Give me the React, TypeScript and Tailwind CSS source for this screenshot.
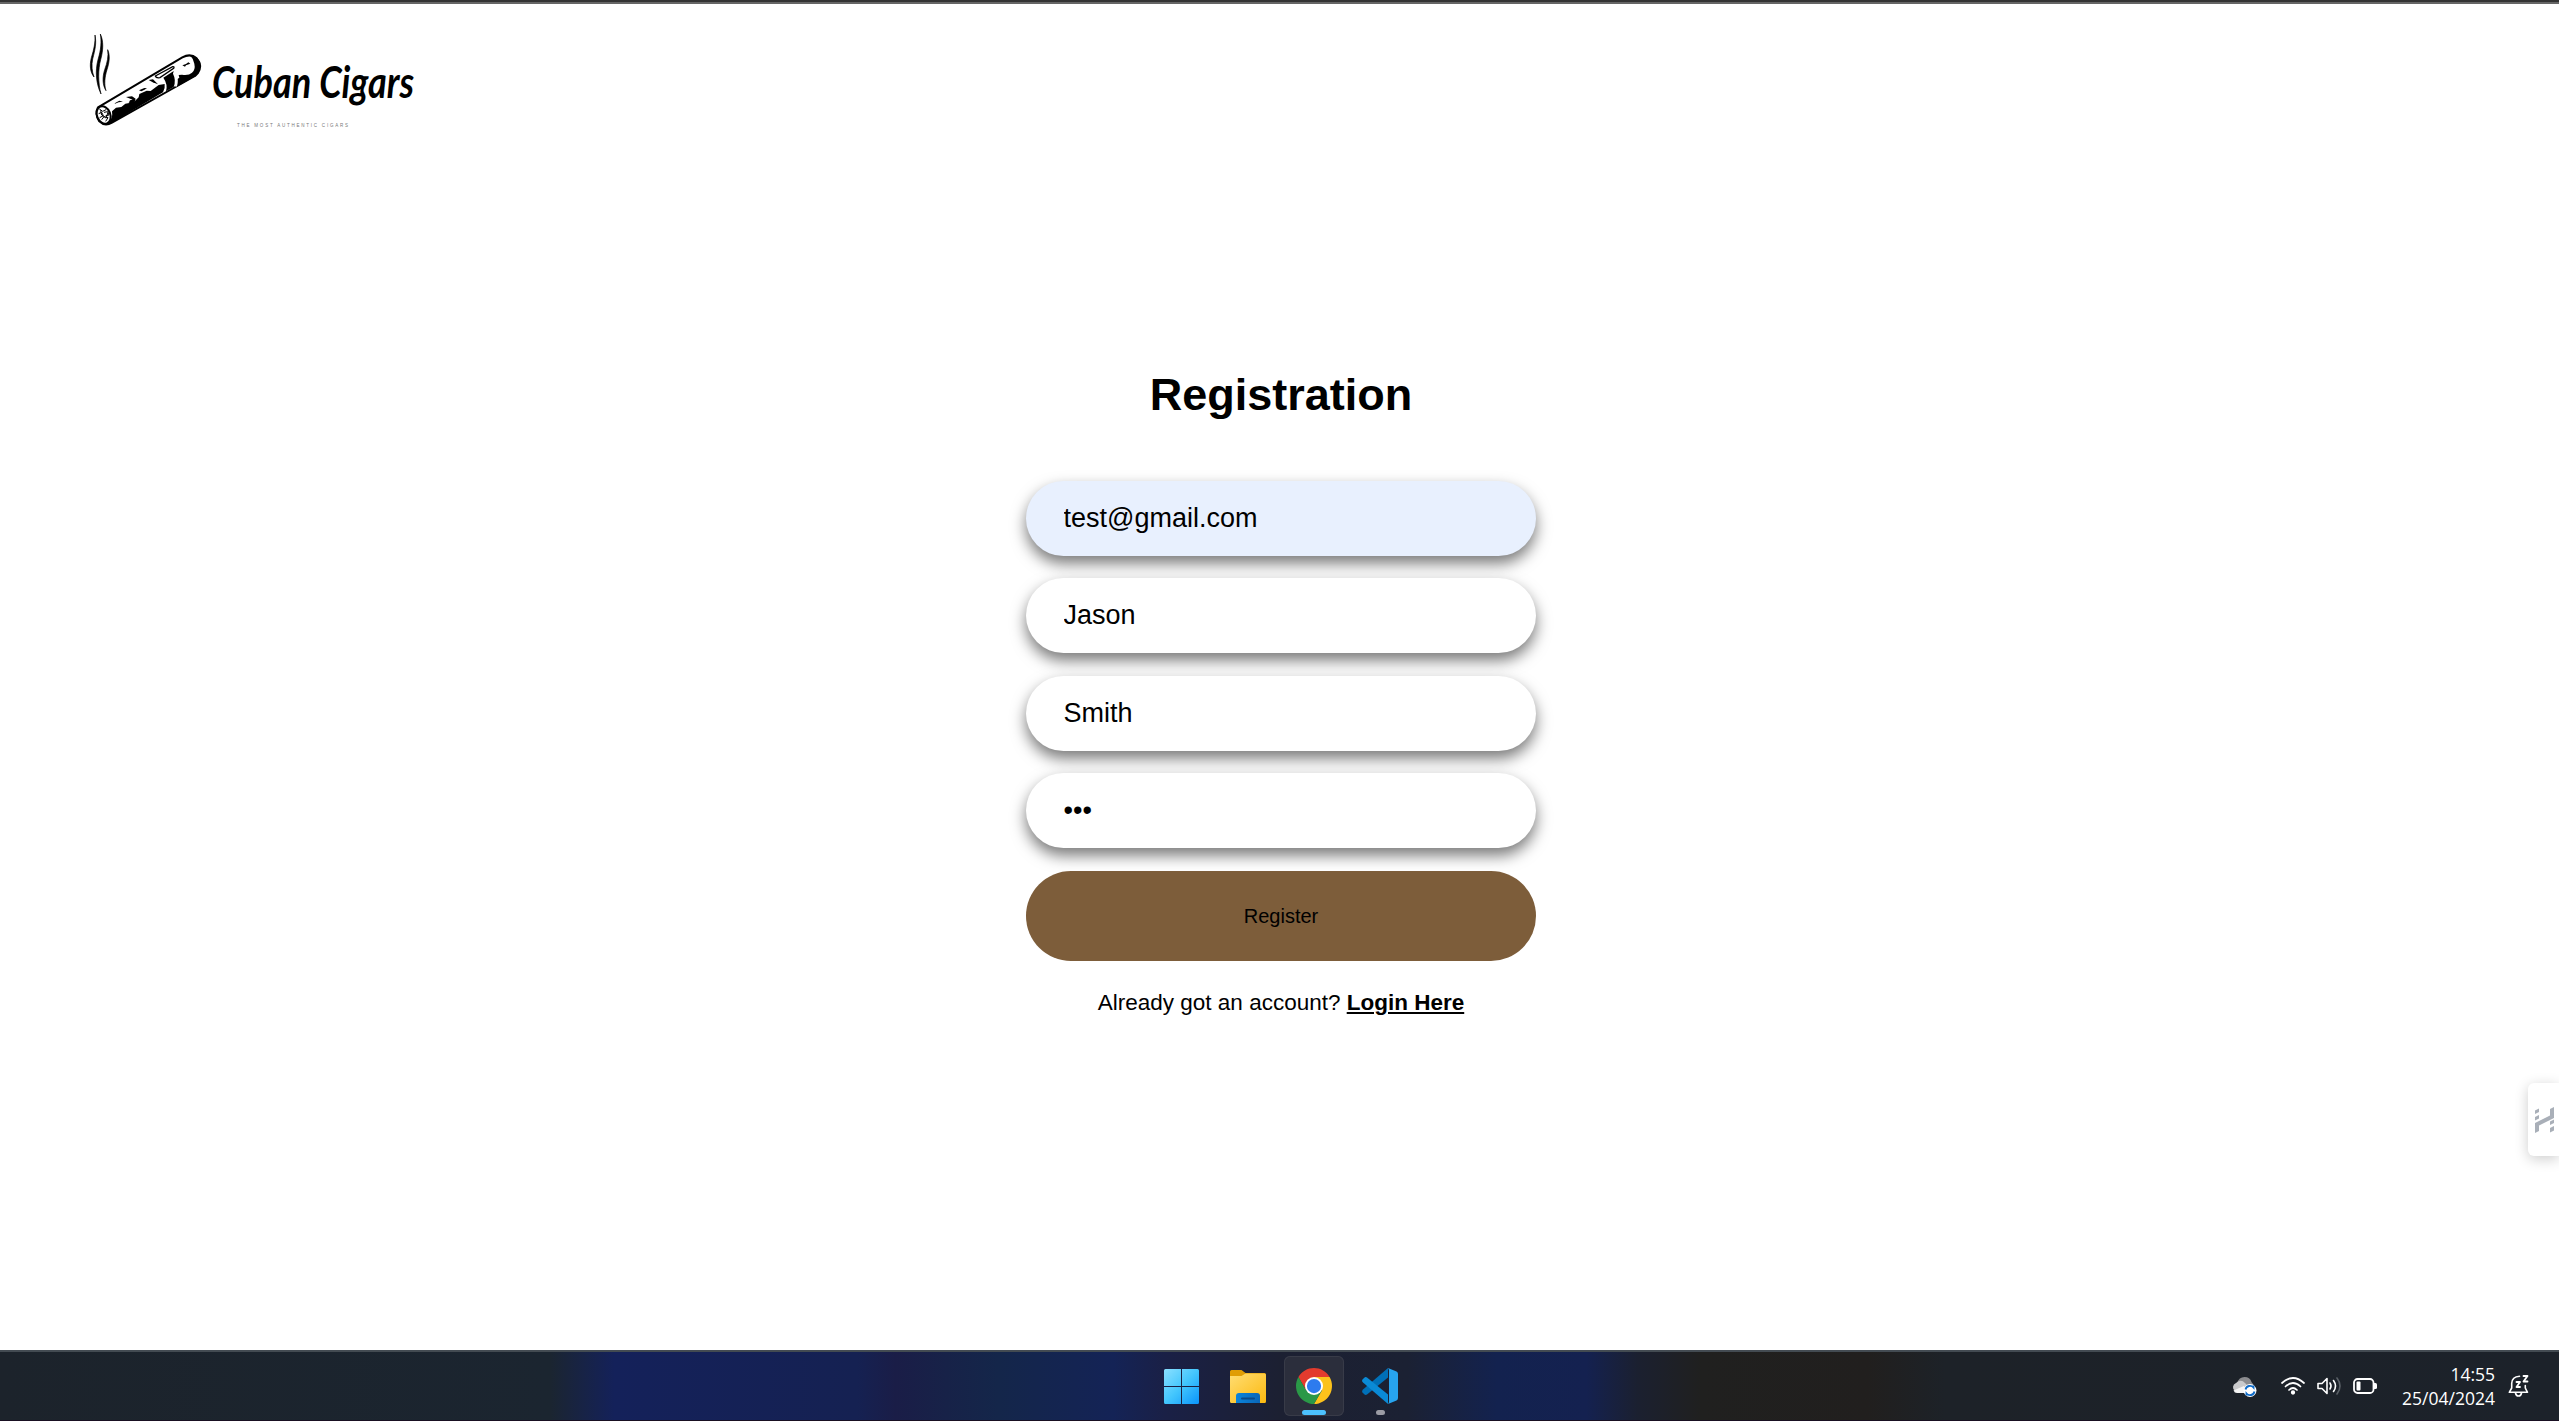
import React from "react";

function CigarMark() {
  return (
    <svg className="block h-[110px] w-[130px]" viewBox="0 0 390 330">
      <g fill="#000" stroke="#000" strokeWidth="2" strokeLinejoin="round">
        <path d="M45 30 C50 55 45 75 38 102 C34 120 36 140 42 156 C31 142 28 122 34 98 C42 72 46 54 45 30Z" />
        <path d="M61 27 C71 48 70 75 62 104 C54 134 54 172 63 207 C48 176 45 138 54 104 C63 74 65 50 61 27Z" />
        <path d="M83 74 C91 92 88 112 81 134 C74 156 72 178 78 197 C67 180 67 156 74 134 C82 112 86 94 83 74Z" />
      </g>
      <path d="M54 247 L307 97 Q332 84 350 100 Q369 121 353 145 L345 153 L96 293 Q74 305 58 289 Q43 268 54 247Z" fill="#fff" stroke="#000" strokeWidth="6" strokeLinejoin="round" />
      <path d="M330 91 Q354 92 361 115 Q364 135 347 153 L288 187 Q290 174 288 165 L298 158 L296 150 L306 149 Q326 152 336 143 Q347 134 343 116 Q340 101 330 91Z" fill="#000" />
      <path d="M250 158 L281 138 L279 146 Q289 165 281 186 L258 199 Q264 178 250 158Z" fill="#000" />
      <path d="M281 146 Q292 164 286 186 L291 184 Q297 164 288 145Z" fill="#fff" />
      <path d="M82 298 Q100 280 96 259 L108 248 L124 246 L136 236 L148 234 L154 226 L164 229 L176 217 L178 207 L200 197 L212 198 L236 180 L254 177 Q256 190 249 202 L96 293Z" fill="#000" />
      <path d="M138 216 L156 214 L167 221 L164 230 L146 234 L150 226 L158 224Z" fill="#000" />
      <path d="M226 153 L278 125 Q284 124 281 130 L240 158 Q228 160 226 153Z" fill="#fff" stroke="#000" strokeWidth="4" />
      <g fill="#000">
        <path d="M104 235 L118 227 L129 230 L116 232 L105 236Z" />
        <path d="M177 196 L193 189 L201 190 L192 195 L184 199Z" />
        <path d="M206 165 L219 163 L234 178 L218 172Z" />
        <path d="M307 121 L318 117 L325 112 L331 116 L318 121 L315 125Z" />
      </g>
      <ellipse cx="71" cy="270" rx="20" ry="27" transform="rotate(-22 71 270)" fill="#fff" stroke="#000" strokeWidth="6" />
      <path d="M58 252 l10 7 l10 -5 M56 266 l9 -4 l5 10 l-11 6 M72 262 l11 -2 l4 10 l-10 2 M65 284 l7 -9 l12 3 l-7 11 M62 256 l3 14 l12 8 M84 262 l-6 18" fill="none" stroke="#000" strokeWidth="3" />
    </svg>
  );
}

function Logo() {
  return (
    <div className="flex h-[110px] items-start">
      <CigarMark />
      <svg className="block h-[110px] w-[240px] overflow-visible" viewBox="0 0 240 110">
        <text x="2" y="73" textLength="202" lengthAdjust="spacingAndGlyphs" className="font-['Lato',cursive] text-[44px] font-bold italic">
          Cuban Cigars
        </text>
        <text x="27" y="102" textLength="111" className="fill-[#777777] font-['Liberation_Sans',sans-serif] text-[4.5px]">
          THE MOST AUTHENTIC CIGARS
        </text>
      </svg>
    </div>
  );
}

const inputBase =
  "block h-[75px] w-[510px] rounded-full border-0 px-[37.5px] text-[27px] text-black outline-none shadow-[0_7.5px_15px_rgba(0,0,0,0.53)]";

function RegistrationForm() {
  return (
    <form className="mx-auto flex w-[510px] flex-col items-center">
      <h1 className="text-[45px] leading-[52px] font-bold">Registration</h1>
      <div className="mt-[59.5px] flex flex-col gap-[22.5px]">
        <input className={`${inputBase} bg-[#e8f0fe]`} type="text" defaultValue="test@gmail.com" />
        <input className={`${inputBase} bg-white`} type="text" defaultValue="Jason" />
        <input className={`${inputBase} bg-white`} type="text" defaultValue="Smith" />
        <input className={`${inputBase} bg-white`} type="password" defaultValue="abc" />
        <button type="button" className="h-[90px] w-[510px] rounded-full bg-[#7d5d3a] text-[20px] text-black">
          Register
        </button>
      </div>
      <p className="mt-[29.5px] text-[22.5px] leading-[26px] whitespace-nowrap">
        Already got an account? <a className="font-bold underline">Login Here</a>
      </p>
    </form>
  );
}

function SideWidget() {
  return (
    <div className="absolute top-[1083px] right-0 flex h-[73px] w-[31px] items-center rounded-l-[6px] bg-white pl-[7px] shadow-[0_3px_14px_rgba(0,0,0,0.2)]">
      <svg className="h-[26px] w-[19px]" viewBox="0 0 19 26" fill="#a9afb8">
        <path d="M0 3.5 L4 1.5 V5 L0 7Z M0 10 L4 8 V11.5 L0 13.5Z M15 14.5 L19 12.5 V16 L15 18Z M15 21 L19 19 V23.5 L15 25.5Z" />
        <path d="M0 16 L15 8.5 V2 L19 0 V11 L4 18.5 V24 L0 26Z" />
      </svg>
    </div>
  );
}

function WindowsIcon() {
  return (
    <svg className="mr-[1px] size-[35px]" viewBox="0 0 35 35">
      <defs>
        <linearGradient id="win" gradientUnits="userSpaceOnUse" x1="0" y1="0" x2="35" y2="35">
          <stop offset="0" stopColor="#8be0ff" />
          <stop offset="0.5" stopColor="#43c6fd" />
          <stop offset="1" stopColor="#0a94fb" />
        </linearGradient>
      </defs>
      <path fill="url(#win)" d="M1.5 0H17V17H0V1.5Q0 0 1.5 0Z M18 0H33.5Q35 0 35 1.5V17H18Z M0 18H17V35H1.5Q0 35 0 33.5Z M18 18H35V33.5Q35 35 33.5 35H18Z" />
    </svg>
  );
}

function FolderIcon() {
  return (
    <svg className="h-[33px] w-[36px]" viewBox="0 0 36 33">
      <defs>
        <linearGradient id="fold" x1="0" y1="0" x2="1" y2="1">
          <stop offset="0" stopColor="#ffdd73" />
          <stop offset="1" stopColor="#fcb90f" />
        </linearGradient>
        <linearGradient id="pocket" x1="0" y1="0" x2="1" y2="0">
          <stop offset="0" stopColor="#0a84dc" />
          <stop offset="1" stopColor="#0a66b8" />
        </linearGradient>
      </defs>
      <path d="M0 1.5Q0 0 1.5 0H11.5L15.5 3H34.5Q36 3 36 5V12H0Z" fill="#e09d05" />
      <path d="M0 6H11.5L15.5 3.5H34.5Q36 3.5 36 5V31.500Q36 33 34.500 33H1.500Q0 33 0 31.500Z" fill="url(#fold)" />
      <path d="M6 33V26Q6 23 9 23H27Q30 23 30 26V33Z" fill="url(#pocket)" />
      <rect x="11" y="27.500" width="14" height="2" rx="1" fill="#0b4a89" />
    </svg>
  );
}

function ChromeIcon() {
  return (
    <svg className="size-[36px]" viewBox="0 0 48 48">
      <path d="M24 12H44.780A24 24 0 0 0 3.220 12L13.610 30Z" fill="#e33b2e" />
      <path d="M34.390 30L24 48A24 24 0 0 0 44.780 12H24Z" fill="#fcc21b" />
      <path d="M13.610 30L3.220 12A24 24 0 0 0 24 48L34.390 30Z" fill="#2a9847" />
      <circle cx="24" cy="24" r="12" fill="#fff" />
      <circle cx="24" cy="24" r="9.500" fill="#2d7bee" />
    </svg>
  );
}

function CodeIcon() {
  return (
    <svg className="size-[36px]" viewBox="0 0 36 36">
      <path d="M1 21.500L26 0V9.500L5 26.500Q3.500 27.500 2 26L.5 24.500Q-.5 23 1 21.500Z" fill="#0070b8" />
      <path d="M1 14.500L26 36V26.500L5 9.500Q3.500 8.500 2 10L.5 11.500Q-.5 13 1 14.500Z" fill="#0a8ad6" />
      <path d="M26 0L34.500 3.500Q36 4.200 36 6V30Q36 31.800 34.500 32.500L26 36Q27 35 27 33.500V2.500Q27 1 26 0Z" fill="#27a4ef" />
    </svg>
  );
}

function Slot({ children, active, dot }: { children: React.ReactNode; active?: boolean; dot?: boolean }) {
  return (
    <div className={active ? "relative flex size-[60px] items-center justify-center rounded-[6px] bg-[#2b2e3c] ring-1 ring-[#383b48] ring-inset" : "relative flex size-[60px] items-center justify-center"}>
      {children}
      {active && <span className="absolute bottom-[1px] left-[18px] h-[5px] w-[24px] rounded-full bg-[#4cc2ff]" />}
      {dot && <span className="absolute bottom-[1px] left-[26px] h-[5px] w-[9px] rounded-full bg-[#9b9ca5]" />}
    </div>
  );
}

function CloudIcon() {
  return (
    <svg className="h-[22px] w-[26px]" viewBox="0 0 26 22">
      <path d="M5 7Q7 1 12.500 1Q18 1 19.500 6Q22 8 22 12L10 14Z" fill="#8b8c8f" />
      <path d="M3 15A4.500 4.500 0 0 1 4 7Q9 2.500 13 7L17 11L12 16Z" fill="#c9cacc" />
      <path d="M1.500 14.500L12 10L15 17H5Q2.500 17 1.500 14.500Z" fill="#f4f4f4" />
      <circle cx="18" cy="14.500" r="6.500" fill="#fff" />
      <g fill="none" stroke="#0f6cc9" strokeWidth="1.900">
        <path d="M13.500 13.500A4.600 4.600 0 0 1 21.500 11.500V9.500M22.500 15.500A4.600 4.600 0 0 1 14.500 17.500V19.500" />
      </g>
    </svg>
  );
}

function WifiIcon() {
  return (
    <svg className="h-[18px] w-[24px]" viewBox="0 0 24 18" fill="none" stroke="#fff" strokeWidth="1.700" strokeLinecap="round">
      <path d="M1 6Q12 -4 23 6M4.500 9.500Q12 2.500 19.500 9.500M8 13Q12 9 16 13" />
      <circle cx="12" cy="15.500" r="1.300" fill="#fff" />
    </svg>
  );
}

function SpeakerIcon() {
  return (
    <svg className="h-[20px] w-[24px]" viewBox="0 0 24 20" fill="none" stroke="#fff" strokeWidth="1.600" strokeLinecap="round" strokeLinejoin="round">
      <path d="M1 7.500V12.500H5L10 17.500V2.500L5 7.500Z" />
      <path d="M13 7Q15 10 13 13M16.500 4.500Q20.500 10 16.500 15.500" />
      <path d="M20 2Q26 10 20 18" stroke="#5a6067" />
    </svg>
  );
}

function BatteryIcon() {
  return (
    <svg className="h-[16px] w-[24px]" viewBox="0 0 24 16">
      <rect x="1" y="1" width="19.500" height="14" rx="3.500" fill="none" stroke="#fff" strokeWidth="1.800" />
      <rect x="3.500" y="3.500" width="4" height="9" rx="1" fill="#fff" />
      <path d="M21 5H22.500Q24 5 24 6.500V9.500Q24 11 22.500 11H21Z" fill="#fff" />
    </svg>
  );
}

function BellIcon() {
  return (
    <svg className="h-[22px] w-[22px]" viewBox="0 0 22 22" fill="none" stroke="#fff" strokeWidth="1.600" strokeLinejoin="round" strokeLinecap="round">
      <path d="M11.500 1.200Q4 1.500 3.700 8.500V13L1.300 17.300H19.500L17.300 13V10.500" />
      <path d="M7.500 18Q8 21 10.500 21Q13 21 13.500 18" />
      <path d="M8.500 7H12L8.500 12H12" strokeWidth="1.800" />
      <path d="M15.500 1H19.500L15.500 6.500H19.500" strokeWidth="1.800" />
    </svg>
  );
}

function Taskbar() {
  return (
    <footer className="grid h-[71px] shrink-0 grid-cols-[1152px_258px_1fr] border-t-2 border-b border-t-[#434b52] border-b-[#190f22] bg-[linear-gradient(90deg,#1c232b_0%,#1b2530_21.500%,#14215a_24%,#152152_33.500%,#1a1d47_35%,#172248_37%,#14264a_39%,#142356_43.500%,#1a2046_45.500%,#1c2032_50%,#1b2133_55%,#13224f_58.500%,#142150_62%,#1b2030_64%,#20201f_66.500%,#211f1e_73%,#1d2228_76%,#1c222a_100%)]">
      <div />
      <div className="flex gap-[6px] pt-[4px]">
        <Slot><WindowsIcon /></Slot>
        <Slot><FolderIcon /></Slot>
        <Slot active><ChromeIcon /></Slot>
        <Slot dot><CodeIcon /></Slot>
      </div>
      <div className="flex items-center justify-end pr-[29px]">
        <div className="pt-[2px]"><CloudIcon /></div>
        <div className="ml-[23px] flex items-center gap-[12px]">
          <WifiIcon />
          <SpeakerIcon />
          <BatteryIcon />
        </div>
        <div className="ml-[24px] w-[94px] text-right font-['Open_Sans',sans-serif] text-[17.500px] leading-[24px] text-white">
          <div>14:55</div>
          <div>25/04/2024</div>
        </div>
        <div className="ml-[13px]"><BellIcon /></div>
      </div>
    </footer>
  );
}

export default function App() {
  return (
    <div className="relative flex h-[1421px] w-[2559px] flex-col overflow-hidden bg-white font-['Liberation_Sans',Arial,sans-serif] text-black">
      <div className="h-[4px] shrink-0 border-t-2 border-[#333333] bg-[#666666]" />
      <main className="h-[1346px] shrink-0 pt-[21px]">
        <header className="pl-[80px]">
          <Logo />
        </header>
        <div className="pt-[234px] pl-[3px]">
          <RegistrationForm />
        </div>
      </main>
      <Taskbar />
      <SideWidget />
    </div>
  );
}
